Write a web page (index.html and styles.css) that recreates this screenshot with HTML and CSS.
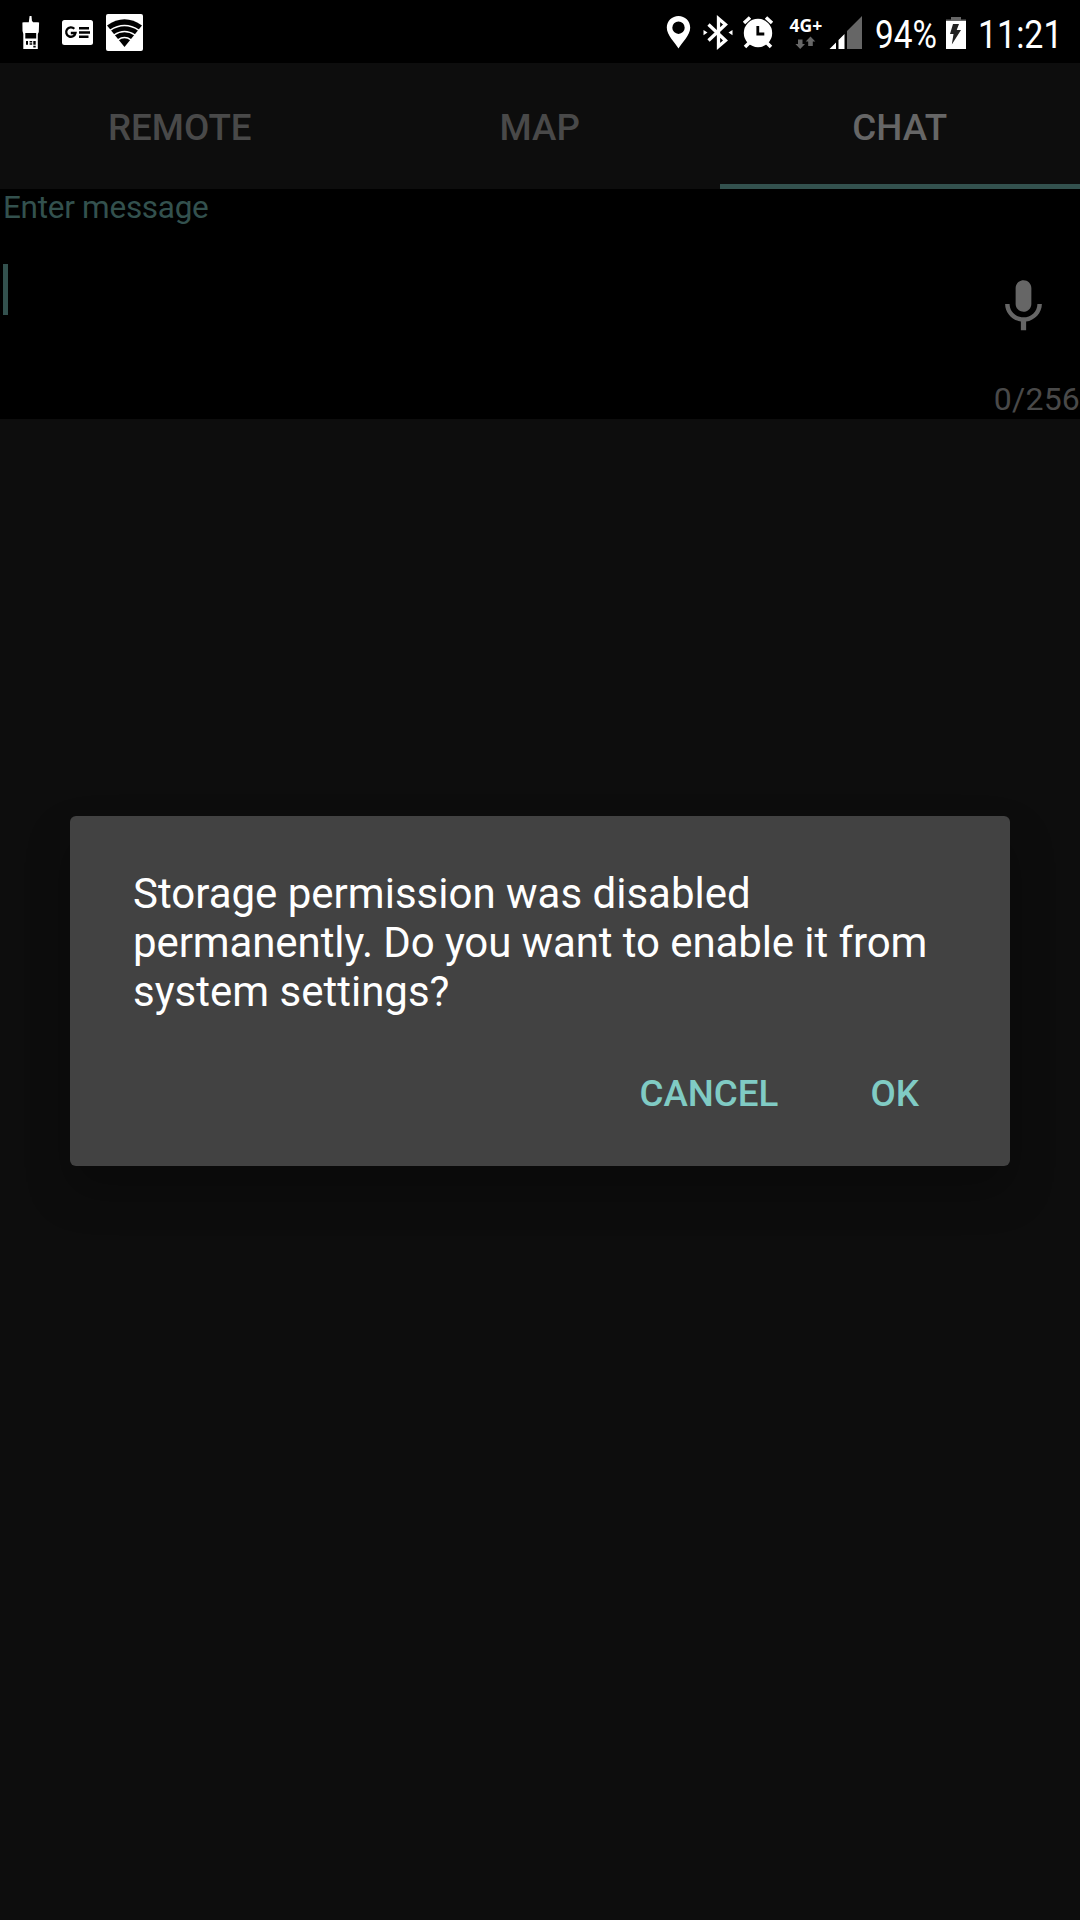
FILE: index.html
```html
<!DOCTYPE html>
<html lang="en">
<head>
<meta charset="utf-8">
<title>Chat</title>
<link rel="stylesheet" href="styles.css">
</head>
<body>
<div class="screen">
  <header class="status">
    <div class="status-left">
      <svg width="160" height="63" viewBox="0 0 160 63">
        <g fill="#fff">
          <path d="M29.600 16h1.900l.5 5.500h1v.8h4.500l1.600.2-.3 9.500-1 2v15H23.300V34l-.8-3-.1-8.500 1.600-.3h4.800z"/>
          <rect x="62" y="20" width="31" height="25" rx="2.500"/>
          <rect x="106" y="14" width="37" height="37" rx="2"/>
        </g>
        <g fill="#000">
          <path d="M25.300 33h10.900v5.500H25.300zM26 41h2v3.700h-2zM29.600 41h2.600v1.500h-2.600zM29.600 43.200h2.600v1.500h-2.600zM33.300 41h2.400v3.700h-2.400zM33.300 45.800h2.400v1.700h-2.400z"/>
          <path d="M79 27h10v2.600H79zM79 31.200h11v2.600H79zM79 35.400h9.500V38H79z"/>
        </g>
        <path d="M74.300 28.800A4.700 4.700 0 1 0 75.500 33h-4.700" fill="none" stroke="#000" stroke-width="2.300"/>
        <path d="M107 25.500Q124.500 12.800 142 25.500L124.500 47z" fill="#000"/>
        <g fill="none" stroke="#fff" stroke-width="1.500">
          <path d="M110 30.300q14.500-9.600 29 0M114 35q10.500-7.200 21 0M118 39.800q6.500-4.600 13 0"/>
        </g>
      </svg>
    </div>
    <div class="status-right">
      <svg width="225" height="63" viewBox="650 0 225 63">
        <path fill="#fff" fill-rule="evenodd" d="M678.500 16c-6.500 0-11.700 5-11.700 11.500 0 8 8.200 15 11.700 21 3.500-6 11.700-13 11.700-21C690.200 21 685 16 678.500 16zm0 5.500a6.200 6.200 0 1 1 0 12.400 6.200 6.200 0 0 1 0-12.400z"/>
        <path d="M708.500 24.500L725.500 40.500 718.500 46.500V18.500L725.500 24.500 708.500 40.500" fill="none" stroke="#fff" stroke-width="3.300"/>
        <path fill="#fff" d="M703.500 30l4 2.600-4 2.600zM732.500 30l-4 2.600 4 2.600z"/>
        <circle cx="758" cy="33" r="14.200" fill="#fff"/>
        <path d="M744 23l6-5.500M772 23l-6-5.500M749 43l-4 4M767 43l4 4" stroke="#fff" stroke-width="3.500"/>
        <path d="M757.800 26v8h6.500" fill="none" stroke="#000" stroke-width="2.800"/>
        <text class="network" x="789.500" y="32">4G+</text>
        <path fill="#666" d="M798 39.500h4.500v4.500h2.500l-4.800 5-4.800-5h2.600zM808.200 46v-4.500h-2.500l4.800-5 4.800 5h-2.500V46zM847 31l15-15v33h-15z"/>
        <path fill="#fff" d="M829.500 49l6.500-6.500V49zM838.500 40l6-6v15h-6z"/>
      </svg>
      <span class="battery-text">94%</span>
      <svg class="battery" width="21" height="63" viewBox="946 0 21 63">
        <path fill="#666" d="M951 17h10v4h-10zM946 19.500h20V22h-20z"/>
        <path fill="#fff" d="M946 21h20v28h-20z"/>
        <path fill="#222" d="M953 24h6l-2.300 6h4.300l-9.200 14.500 1.700-10.500h-3.500z"/>
      </svg>
      <span class="clock">11:21</span>
    </div>
  </header>
  <nav class="tabs">
    <span class="tab">REMOTE</span>
    <span class="tab">MAP</span>
    <span class="tab active">CHAT</span>
  </nav>
  <section class="composer">
    <div class="hint">Enter message</div>
    <div class="entry">
      <div class="caret"></div>
      <svg class="mic" width="63" height="63" viewBox="0 0 24 24">
        <path fill="#666" d="M12 14c1.660 0 2.990-1.340 2.990-3L15 5c0-1.660-1.340-3-3-3S9 3.340 9 5v6c0 1.660 1.340 3 3 3zm5.300-3c0 3-2.540 5.100-5.300 5.100S6.700 14 6.700 11H5c0 3.410 2.720 6.230 6 6.720V21h2v-3.280c3.280-.48 6-3.300 6-6.720h-1.700z"/>
      </svg>
    </div>
    <div class="counter">0/256</div>
  </section>
  <main class="content">
    <div class="dialog">
      <p class="message">Storage permission was disabled <span class="tight">permanently. Do you want to enable it from</span> system settings?</p>
      <div class="actions">
        <span class="action">CANCEL</span>
        <span class="action">OK</span>
      </div>
    </div>
  </main>
</div>
</body>
</html>
```
FILE: styles.css
```css
* { box-sizing: border-box; }
body {
  margin: 0;
  background: #0d0d0d;
  font-family: Roboto, "Liberation Sans", sans-serif;
}
.screen {
  width: 1080px;
  height: 1920px;
  display: flex;
  flex-direction: column;
  overflow: hidden;
}
.status {
  height: 63px;
  flex: none;
  display: flex;
  justify-content: space-between;
  background: #000;
  color: #fff;
}
.status svg { display: block; flex: none; }
.status-left { display: flex; }
.status-right { display: flex; width: 430px; }
.network { font: 700 17.500px "Noto Sans", sans-serif; fill: #fff; }
.battery-text, .clock {
  font-size: 39px;
  line-height: 70px;
  white-space: nowrap;
  transform-origin: 0 50%;
}
.battery-text { width: 71px; transform: scaleX(.855); }
.clock { margin-left: 11px; transform: scaleX(.87); }
.tabs {
  height: 126px;
  flex: none;
  display: grid;
  grid-template-columns: repeat(3, 1fr);
}
.tab {
  display: flex;
  align-items: center;
  justify-content: center;
  padding: 7px .5px 0 0;
  border-bottom: 5px solid transparent;
  color: #494949;
  font-size: 36.750px;
  font-weight: 500;
}
.tab.active { color: #666; border-bottom-color: #33514e; }
.composer {
  height: 230px;
  flex: none;
  display: flex;
  flex-direction: column;
  background: #000;
}
.hint {
  height: 75px;
  flex: none;
  padding-left: 3px;
  color: #33514e;
  font-size: 31.500px;
  letter-spacing: -.28px;
  line-height: 38px;
}
.entry {
  height: 113px;
  flex: none;
  display: flex;
  justify-content: space-between;
  padding: 0 25px 0 3px;
}
.caret { width: 5px; height: 51px; background: #33514e; }
.mic { margin-top: 11px; }
.counter {
  height: 42px;
  color: #494949;
  font-size: 32px;
  letter-spacing: .2px;
  line-height: 44px;
  text-align: right;
}
.content {
  flex: 1;
  padding: 397px 70px 0;
}
.dialog {
  height: 350px;
  padding: 53px 63px 0;
  background: #424242;
  border-radius: 6px;
  box-shadow: 0 24px 44px rgba(0, 0, 0, .27);
}
.message {
  margin: 0;
  color: #fff;
  font-size: 42px;
  line-height: 49px;
}
.tight { letter-spacing: -.1px; }
.actions {
  display: flex;
  justify-content: flex-end;
  gap: 92px;
  margin-top: 56px;
  padding-right: 28px;
  color: #80cbc4;
  font-size: 36.750px;
  font-weight: 500;
  line-height: 43px;
}
```
